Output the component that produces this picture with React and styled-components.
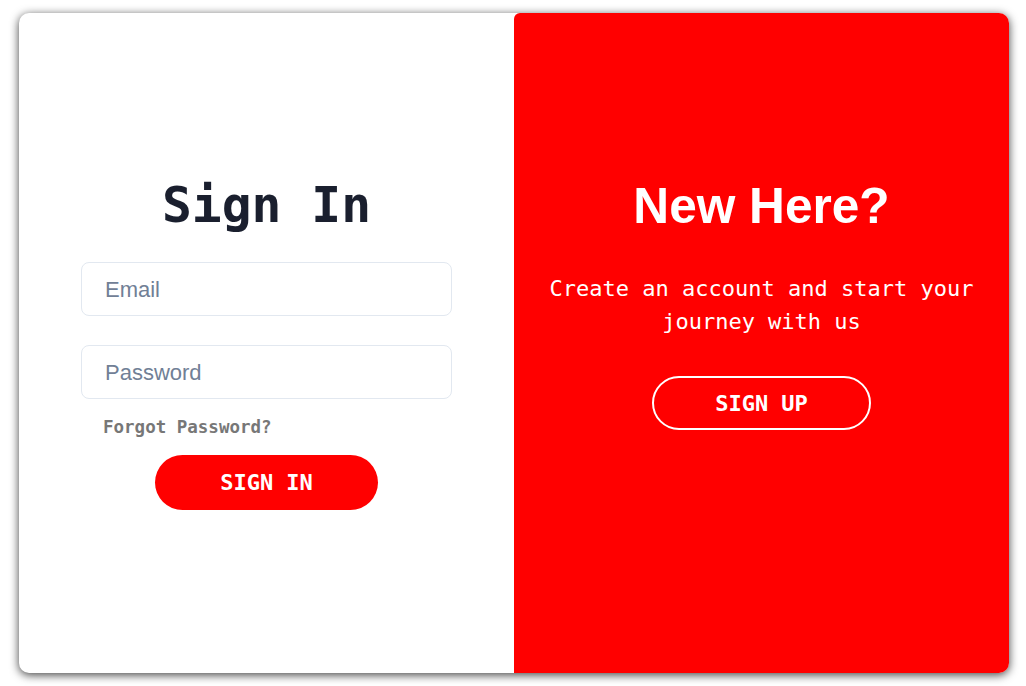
import React from 'react';
import styled, { createGlobalStyle } from 'styled-components';

const GlobalStyle = createGlobalStyle`
  * {
    box-sizing: border-box;
  }
  body {
    margin: 0;
    background: #ffffff;
  }
`;

const App = () => {
  return (
    <>
      <GlobalStyle />
      <Page>
        <Card>
          <SignInPanel>
            <Title>Sign In</Title>
            <Input type="email" placeholder="Email" />
            <Input type="password" placeholder="Password" $gap />
            <Forgot href="#">Forgot Password?</Forgot>
            <SolidButton>SIGN IN</SolidButton>
          </SignInPanel>
          <WelcomePanel>
            <WelcomeTitle>New Here?</WelcomeTitle>
            <WelcomeText>Create an account and start your journey with us</WelcomeText>
            <GhostButton>SIGN UP</GhostButton>
          </WelcomePanel>
        </Card>
      </Page>
    </>
  );
};

export default App;

const Page = styled.div`
  min-height: 686px;
  padding: 13px 0 13px 19px;
`;

const Card = styled.div`
  display: grid;
  grid-template-columns: 1fr 1fr;
  width: 990px;
  height: 660px;
  background: #ffffff;
  border-radius: 10px;
  box-shadow: 0 2px 10px rgba(0, 0, 0, 0.75);
`;

const SignInPanel = styled.form`
  display: flex;
  flex-direction: column;
  align-items: center;
  justify-content: center;
  padding: 0 62px;
`;

const Title = styled.h1`
  margin: 0 0 28px;
  font-family: 'DejaVu Sans Mono', monospace;
  font-size: 49.6px;
  font-weight: 700;
  line-height: 57px;
  color: #1a1f2e;
`;

const Input = styled.input`
  width: 100%;
  height: 54px;
  margin-top: ${props => (props.$gap ? '29px' : '0')};
  padding: 2px 23px 0;
  font-family: 'Liberation Sans', Arial, sans-serif;
  font-size: 22px;
  color: #1a1f2e;
  background: #ffffff;
  border: 1px solid #e2e8f0;
  border-radius: 8px;
  outline: none;

  &::placeholder {
    color: #718096;
  }
`;

const Forgot = styled.a`
  align-self: flex-start;
  margin: 18px 0 0 22px;
  font-family: 'DejaVu Sans Mono', monospace;
  font-size: 17.5px;
  font-weight: 700;
  line-height: 20px;
  color: #777777;
  text-decoration: none;
`;

const SolidButton = styled.button`
  width: 223px;
  height: 55px;
  margin-top: 18px;
  font-family: 'DejaVu Sans Mono', monospace;
  font-size: 22px;
  font-weight: 700;
  color: #ffffff;
  background: #ff0000;
  border: none;
  border-radius: 28px;
  cursor: pointer;
`;

const WelcomePanel = styled.div`
  display: flex;
  flex-direction: column;
  align-items: center;
  justify-content: flex-start;
  padding: 165px 30px 0;
  background: #ff0000;
  border-radius: 6px 10px 10px 0;
  text-align: center;
`;

const WelcomeTitle = styled.h2`
  margin: 0 0 37px;
  font-family: 'Liberation Sans', Arial, sans-serif;
  font-size: 49.6px;
  font-weight: 700;
  line-height: 57px;
  color: #ffffff;
`;

const WelcomeText = styled.p`
  margin: 0 0 38px;
  font-family: 'DejaVu Sans Mono', monospace;
  font-size: 22px;
  line-height: 33px;
  color: #ffffff;
`;

const GhostButton = styled.button`
  width: 219px;
  height: 54px;
  font-family: 'DejaVu Sans Mono', monospace;
  font-size: 22px;
  font-weight: 700;
  color: #ffffff;
  background: transparent;
  border: 2px solid #ffffff;
  border-radius: 27px;
  cursor: pointer;
`;
